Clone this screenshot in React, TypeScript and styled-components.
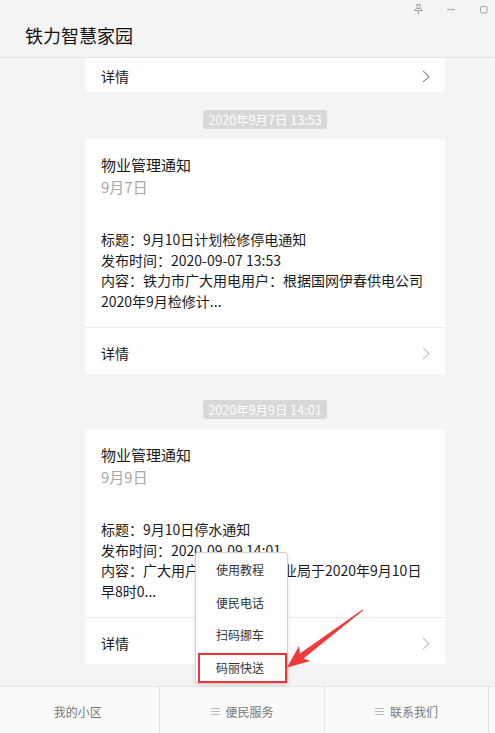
import React from 'react';
import styled, { createGlobalStyle } from 'styled-components';

const Global = createGlobalStyle`
  html, body { margin: 0; padding: 0; }
  body {
    font-family: "Noto Sans CJK SC", "Noto Sans", sans-serif;
    background: #f4f4f4;
  }
`;

const Page = styled.div`
  position: relative;
  width: 495px;
  height: 733px;
  display: flex;
  flex-direction: column;
  background: #f4f4f4;
  overflow: hidden;
`;

const Header = styled.header`
  position: relative;
  flex: none;
  box-sizing: border-box;
  height: 58px;
  padding: 12px 0 0 25px;
  border-bottom: 1px solid #e2e2e2;
  display: flex;
  align-items: center;
`;

const AppTitle = styled.h1`
  margin: 0;
  font-size: 18px;
  font-weight: 400;
  line-height: 1;
  color: #111;
`;

const WindowControls = styled.div`
  position: absolute;
  top: 4px;
  right: 7px;
  display: flex;
  align-items: center;
  gap: 24px;
`;

const Feed = styled.main`
  flex: 1;
  overflow: hidden;
  display: flex;
  flex-direction: column;
  padding-left: 85px;
`;

const Card = styled.section<{ $clipped?: boolean }>`
  width: 360px;
  background: #fff;
  border-radius: ${p => (p.$clipped ? '0 0 4px 4px' : '4px')};
  flex: none;
`;

const Stamp = styled.div<{ $top: number }>`
  width: 360px;
  display: flex;
  justify-content: center;
  margin: ${p => p.$top}px 0 10px;
  flex: none;
`;

const StampLabel = styled.span`
  display: inline-block;
  padding: 0 5px;
  height: 19px;
  line-height: 19px;
  font-size: 12.5px;
  color: #fff;
  background: #d8d8d8;
  border-radius: 3px;
`;

const CardBody = styled.div`
  padding: 15px 16px 16px;
  border-bottom: 1px solid #ebebeb;
`;

const CardTitle = styled.div`
  font-size: 15px;
  line-height: 22px;
  color: #1a1a1a;
`;

const CardDate = styled.div`
  font-size: 15px;
  line-height: 22px;
  color: #a8a8a8;
`;

const CardText = styled.div`
  margin-top: 31px;
  font-size: 14px;
  line-height: 20.5px;
  color: #1a1a1a;
`;

const DetailRow = styled.div<{ $compact?: boolean }>`
  display: flex;
  align-items: center;
  justify-content: space-between;
  padding: ${p => (p.$compact ? '7px 15px 5px 16px' : '14px 15px 10px 16px')};
  font-size: 14px;
  line-height: 22px;
  color: #1a1a1a;
`;

const TabBar = styled.nav`
  flex: none;
  box-sizing: border-box;
  height: 47px;
  margin-left: -4px;
  border-top: 1px solid #e4e4e4;
  background: #fafafa;
  display: grid;
  grid-template-columns: repeat(3, 164.4px);
`;

const Tab = styled.div`
  display: flex;
  align-items: center;
  justify-content: center;
  gap: 6px;
  padding-top: 2px;
  border-right: 1px solid #e4e4e4;
  font-size: 12px;
  color: #777;
`;

const Menu = styled.ul`
  position: absolute;
  left: 195px;
  top: 552px;
  width: 93px;
  box-sizing: border-box;
  margin: 0;
  padding: 0;
  list-style: none;
  background: #fff;
  border: 1px solid #cfcfcf;
  border-radius: 3px;
  box-shadow: 0 1px 4px rgba(0, 0, 0, 0.12);
`;

const MenuItem = styled.li<{ $marked?: boolean }>`
  position: relative;
  height: 32.5px;
  line-height: 34px;
  padding-left: 20px;
  font-size: 12px;
  color: #333;

  ${p =>
    p.$marked &&
    `
    &::after {
      content: '';
      position: absolute;
      left: 2px;
      right: 0;
      top: 2px;
      bottom: 0;
      border: 2px solid #ec3535;
    }
  `}
`;

const Overlay = styled.svg`
  position: absolute;
  left: 0;
  top: 0;
  pointer-events: none;
`;

const Chevron = ({ color }: { color: string }) => (
  <svg width="8" height="13" viewBox="0 0 8 13">
    <path d="M1 0.8 L7 6.5 L1 12.2" fill="none" stroke={color} strokeWidth="1.1" />
  </svg>
);

const MenuIcon = () => (
  <svg width="9" height="8" viewBox="0 0 9 8">
    <path d="M0 1.5H9M0 4.5H9M0 7.5H9" stroke="#bbb" strokeWidth="1" />
  </svg>
);

type Notice = {
  stamp: string;
  stampTop: number;
  date: string;
  lines: string[];
};

const notices: Notice[] = [
  {
    stamp: '2020年9月7日 13:53',
    stampTop: 18,
    date: '9月7日',
    lines: [
      '标题：9月10日计划检修停电通知',
      '发布时间：2020-09-07 13:53',
      '内容：铁力市广大用电用户：根据国网伊春供电公司2020年9月检修计...',
    ],
  },
  {
    stamp: '2020年9月9日 14:01',
    stampTop: 26,
    date: '9月9日',
    lines: [
      '标题：9月10日停水通知',
      '发布时间：2020-09-09 14:01',
      '内容：广大用户：伊春铁力林业局于2020年9月10日早8时0...',
    ],
  },
];

export default function App() {
  return (
    <Page>
      <Global />
      <Header>
        <AppTitle>铁力智慧家园</AppTitle>
        <WindowControls>
          <svg width="9" height="11" viewBox="0 0 9 11">
            <path
              d="M2.5 0.5H6.5M3 0.5V4.5M6 0.5V4.5M0.5 6.5H8.5L6.5 4.5H2.5Z M4.5 6.5V10.5"
              fill="none"
              stroke="#a0a0a0"
              strokeWidth="1"
            />
          </svg>
          <svg width="9" height="11" viewBox="0 0 9 11">
            <path d="M0 5.5H8" stroke="#b0b0b0" strokeWidth="1.2" />
          </svg>
          <svg width="8" height="11" viewBox="0 0 8 11">
            <rect x="0.5" y="2.5" width="6.5" height="6.5" rx="1.5" fill="none" stroke="#a0a0a0" strokeWidth="1" />
          </svg>
        </WindowControls>
      </Header>

      <Feed>
        <Card $clipped>
          <DetailRow $compact>
            <span>详情</span>
            <Chevron color="#8a8a8a" />
          </DetailRow>
        </Card>
        {notices.map(n => (
          <React.Fragment key={n.stamp}>
            <Stamp $top={n.stampTop}>
              <StampLabel>{n.stamp}</StampLabel>
            </Stamp>
            <Card>
              <CardBody>
                <CardTitle>物业管理通知</CardTitle>
                <CardDate>{n.date}</CardDate>
                <CardText>
                  {n.lines.map(l => (
                    <div key={l}>{l}</div>
                  ))}
                </CardText>
              </CardBody>
              <DetailRow>
                <span>详情</span>
                <Chevron color="#c2c2c2" />
              </DetailRow>
            </Card>
          </React.Fragment>
        ))}
      </Feed>

      <TabBar>
        <Tab>我的小区</Tab>
        <Tab>
          <MenuIcon />
          便民服务
        </Tab>
        <Tab>
          <MenuIcon />
          联系我们
        </Tab>
      </TabBar>

      <Menu>
        <MenuItem>使用教程</MenuItem>
        <MenuItem>便民电话</MenuItem>
        <MenuItem>扫码挪车</MenuItem>
        <MenuItem $marked>码丽快送</MenuItem>
      </Menu>

      <Overlay width="495" height="733" viewBox="0 0 495 733">
        <polygon
          points="362.5,609.5 300,653.5 299,646 287,667.5 310.5,661 303.5,658.5 363,610.5"
          fill="#f03a3a"
        />
      </Overlay>
    </Page>
  );
}
